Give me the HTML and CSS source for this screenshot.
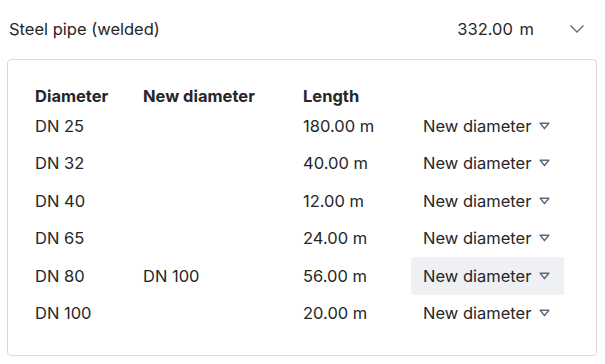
FILE: index.html
```html
<!DOCTYPE html>
<html lang="en">
<head>
    <meta charset="utf-8">
    <title>Steel pipe</title>
    <link rel="stylesheet" href="styles.css">
</head>
<body>
    <section class="group">
        <div class="group-head">
            <span class="group-name">Steel pipe (welded)</span>
            <span class="group-total">332.00 m</span>
            <svg class="chevron" width="16" height="10" viewBox="0 0 16 10">
                <path d="M1.5 1.5L8 8L14.5 1.5" />
            </svg>
        </div>
        <div class="group-body">
            <div class="pipes">
                <div class="th">Diameter</div>
                <div class="th">New diameter</div>
                <div class="th">Length</div>
                <div class="th"></div>

                <div class="td">DN 25</div>
                <div class="td"></div>
                <div class="td">180.00 m</div>
                <div class="td"><span class="pick">New diameter <svg class="tri" width="11" height="8" viewBox="0 0 11 8"><path d="M1.2 1.2H9.8L5.5 6.6Z" /></svg></span></div>

                <div class="td">DN 32</div>
                <div class="td"></div>
                <div class="td">40.00 m</div>
                <div class="td"><span class="pick">New diameter <svg class="tri" width="11" height="8" viewBox="0 0 11 8"><path d="M1.2 1.2H9.8L5.5 6.6Z" /></svg></span></div>

                <div class="td">DN 40</div>
                <div class="td"></div>
                <div class="td">12.00 m</div>
                <div class="td"><span class="pick">New diameter <svg class="tri" width="11" height="8" viewBox="0 0 11 8"><path d="M1.2 1.2H9.8L5.5 6.6Z" /></svg></span></div>

                <div class="td">DN 65</div>
                <div class="td"></div>
                <div class="td">24.00 m</div>
                <div class="td"><span class="pick">New diameter <svg class="tri" width="11" height="8" viewBox="0 0 11 8"><path d="M1.2 1.2H9.8L5.5 6.6Z" /></svg></span></div>

                <div class="td">DN 80</div>
                <div class="td">DN 100</div>
                <div class="td">56.00 m</div>
                <div class="td"><span class="pick hover">New diameter <svg class="tri" width="11" height="8" viewBox="0 0 11 8"><path d="M1.2 1.2H9.8L5.5 6.6Z" /></svg></span></div>

                <div class="td">DN 100</div>
                <div class="td"></div>
                <div class="td">20.00 m</div>
                <div class="td"><span class="pick">New diameter <svg class="tri" width="11" height="8" viewBox="0 0 11 8"><path d="M1.2 1.2H9.8L5.5 6.6Z" /></svg></span></div>
            </div>
        </div>
    </section>
</body>
</html>
```
FILE: styles.css
```css
body {
    margin: 0;
    font-family: Inter, "Noto Sans", sans-serif;
    font-size: 16.5px;
    color: #262626;
    background: #fff;
}
.group {
    width: 605px;
}
.group-head {
    display: flex;
    align-items: center;
    height: 59px;
    padding: 0 20px 2px 9px;
    box-sizing: border-box;
}
.group-name {
    flex: 1;
}
.group-total {
    margin-right: 35px;
    word-spacing: 2px;
}
.chevron {
    fill: none;
    stroke: #5f6b7c;
    stroke-width: 1.4;
}
.group-body {
    margin: 0 8px 0 7px;
    border: 1px solid #dadada;
    border-radius: 4px;
    padding: 24px 0 25px 27px;
    height: 297px;
    box-sizing: border-box;
}
.pipes {
    display: grid;
    grid-template-columns: 108px 160px 108px 153px;
    grid-auto-rows: 37.5px;
    grid-template-rows: 23px;
}
.th {
    font-weight: 700;
    display: flex;
    align-items: center;
}
.td {
    display: flex;
    align-items: center;
}
.pick {
    display: flex;
    align-items: center;
    gap: 8px;
    height: 38px;
    width: 100%;
    padding: 0 12px;
    box-sizing: border-box;
    border-radius: 3px;
}
.pick.hover {
    background: #eef0f3;
}
.tri {
    fill: none;
    stroke: #5f6b7c;
    stroke-width: 1.5;
    stroke-linejoin: round;
}
```
